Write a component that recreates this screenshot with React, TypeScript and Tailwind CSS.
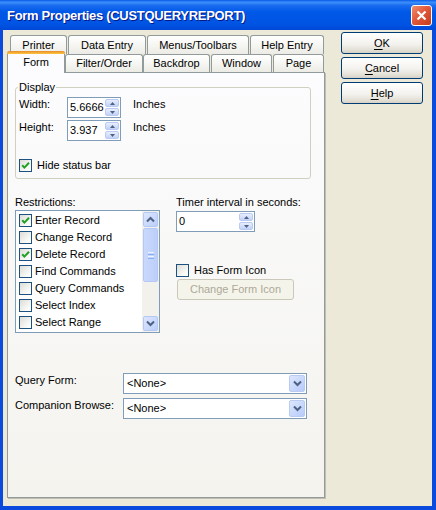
import type { ReactNode } from "react";

const CheckBox = ({ checked }: { checked?: boolean }) => (
  <span className="w-[13px] h-[13px] shrink-0 border border-[#1C5180] bg-[linear-gradient(135deg,#DCDCD7,#F8F8F6_70%,#FFFFFF)] flex items-center justify-center">
    {checked && (
      <svg width="9" height="9" viewBox="0 0 9 9" className="block">
        <polyline points="1.2,4.2 3.4,6.6 8,1.8" fill="none" stroke="#21A121" strokeWidth="2" />
      </svg>
    )}
  </span>
);

const Chevron = ({ up }: { up?: boolean }) => (
  <svg width="9" height="7" viewBox="0 0 9 7" className="block">
    <polyline
      points={up ? "1,5.5 4.5,2 8,5.5" : "1,1.5 4.5,5 8,1.5"}
      fill="none"
      stroke="#4D6185"
      strokeWidth="2"
    />
  </svg>
);

const Triangle = ({ up }: { up?: boolean }) => (
  <svg width="5" height="3" viewBox="0 0 5 3" className="block">
    <polygon points={up ? "0,3 2.5,0 5,3" : "0,0 5,0 2.5,3"} fill="#4D6185" />
  </svg>
);

const Spinner = () => (
  <div className="w-[15px] flex flex-col gap-px py-px pr-px">
    <div className="flex-1 rounded-[2px] border border-[#B9CBF3] bg-[linear-gradient(to_bottom,#E8EEFD,#C2D2F6)] flex items-center justify-center">
      <Triangle up />
    </div>
    <div className="flex-1 rounded-[2px] border border-[#B9CBF3] bg-[linear-gradient(to_bottom,#E8EEFD,#C2D2F6)] flex items-center justify-center">
      <Triangle />
    </div>
  </div>
);

const SpinBox = ({ value, className }: { value: string; className: string }) => (
  <div className={`${className} h-[21px] border border-[#7F9DB9] bg-white flex`}>
    <span className="flex-1 pl-[2px] leading-[19px]">{value}</span>
    <Spinner />
  </div>
);

const Combo = ({ value }: { value: string }) => (
  <div className="w-[184px] h-[21px] border border-[#7F9DB9] bg-white flex">
    <span className="flex-1 pl-[3px] leading-[19px]">{value}</span>
    <div className="w-[16px] my-px mr-px rounded-[2px] border border-[#B9CBF3] bg-[linear-gradient(135deg,#DCE6FE,#B7CBF9)] flex items-center justify-center">
      <Chevron />
    </div>
  </div>
);

const XpButton = ({ children }: { children: ReactNode }) => (
  <div className="w-[82px] h-[22px] rounded-[3px] border border-[#003C74] bg-[linear-gradient(to_bottom,#FFFFFF,#F3F2EE_55%,#E3E0D6_85%,#D6D0C5)] flex items-center justify-center">
    {children}
  </div>
);

const Tab = ({ label, className }: { label: string; className: string }) => (
  <div
    className={`${className} shrink-0 border border-b-0 border-[#919B9C] rounded-t-[3px] bg-[linear-gradient(to_bottom,#FFFFFF,#F6F6F3_50%,#ECEBE5)] flex items-center justify-center`}
  >
    {label}
  </div>
);

const ScrollButton = ({ up }: { up?: boolean }) => (
  <div className="h-[17px] p-px">
    <div className="h-full rounded-[2px] border border-[#B4C8F6] bg-[linear-gradient(135deg,#DCE6FE,#BCCFFA)] flex items-center justify-center">
      <Chevron up={up} />
    </div>
  </div>
);

const restrictions = [
  { label: "Enter Record", checked: true },
  { label: "Change Record", checked: false },
  { label: "Delete Record", checked: true },
  { label: "Find Commands", checked: false },
  { label: "Query Commands", checked: false },
  { label: "Select Index", checked: false },
  { label: "Select Range", checked: false },
];

export default function App() {
  return (
    <div className="w-[436px] h-[510px] flex flex-col bg-[#0A4ADC] font-['Liberation_Sans',Arial,sans-serif] text-[11px] leading-[13px] text-black select-none">
      {/* title bar */}
      <div className="h-[30px] shrink-0 flex items-center bg-[linear-gradient(to_bottom,#0A5CEB_0%,#3C8FF8_8%,#1A6CF0_18%,#0058E8_40%,#0054E3_80%,#0048D8_100%)]">
        <span className="pl-[7px] flex-1 text-[13px] tracking-[-0.3px] font-bold text-white [text-shadow:1px_1px_0_#0A1883]">
          Form Properties (CUSTQUERYREPORT)
        </span>
        <div className="mr-[4px] w-[21px] h-[21px] rounded-[3px] border border-white bg-[linear-gradient(135deg,#F0906E,#E2583A_45%,#C43A1C)] flex items-center justify-center">
          <svg width="11" height="11" viewBox="0 0 11 11" className="block">
            <path d="M1.5 1.5 L9.5 9.5 M9.5 1.5 L1.5 9.5" stroke="white" strokeWidth="2.2" />
          </svg>
        </div>
      </div>

      {/* body */}
      <div className="flex-1 ml-[3px] mr-[4px] mb-[4px] bg-[#ECE9D8] flex pt-[2px] pl-[4px]">
        <div className="pt-[3px] flex flex-col">
          {/* back row of tabs */}
          <div className="h-[16px] flex gap-px pl-[3px]">
            <Tab label="Printer" className="w-[57px] h-[19px]" />
            <Tab label="Data Entry" className="w-[78px] h-[19px]" />
            <Tab label="Menus/Toolbars" className="w-[102px] h-[19px]" />
            <Tab label="Help Entry" className="w-[74px] h-[19px]" />
          </div>
          {/* front row of tabs */}
          <div className="relative z-10 h-[21px] flex items-end">
            <div className="w-[58px] h-[22px] -mb-px shrink-0 border-x border-[#919B9C] rounded-t-[3px] bg-[#FCFCFE] flex flex-col">
              <div className="h-[3px] -mx-px rounded-t-[3px] bg-[linear-gradient(to_bottom,#E68B2C,#FFC73C)]" />
              <div className="flex-1 flex items-start justify-center pt-[2px]">Form</div>
            </div>
            <Tab label="Filter/Order" className="w-[78px] h-[18px]" />
            <Tab label="Backdrop" className="w-[67px] h-[18px]" />
            <Tab label="Window" className="ml-px w-[61px] h-[18px]" />
            <Tab label="Page" className="ml-px w-[51px] h-[18px]" />
          </div>

          {/* tab page */}
          <div className="w-[318px] h-[426px] border border-[#919B9C] bg-[linear-gradient(to_bottom,#FCFCFE,#F4F3EE)] shadow-[1px_1px_0_#C0BEB2] px-[7px]">
            <fieldset className="mt-[8px] w-[296px] border border-[#D0D0BF] rounded-[3px] px-[2px] pb-[6px]">
              <legend className="px-px leading-[13px]">Display</legend>
              <div className="mt-[3px] flex items-start pl-px">
                <span className="w-[48px] pt-[1px]">Width:</span>
                <SpinBox value="5.6666" className="w-[54px]" />
                <span className="ml-[12px] pt-[1px]">Inches</span>
              </div>
              <div className="mt-[2px] flex items-start pl-px">
                <span className="w-[48px] pt-[1px]">Height:</span>
                <SpinBox value="3.937" className="w-[54px]" />
                <span className="ml-[12px] pt-[1px]">Inches</span>
              </div>
              <div className="mt-[18px] flex items-center pl-px">
                <CheckBox checked />
                <span className="ml-[5px]">Hide status bar</span>
              </div>
            </fieldset>

            <div className="mt-[17px] flex">
              <div className="w-[145px]">
                <div>Restrictions:</div>
                <div className="mt-px h-[123px] border border-[#7F9DB9] bg-white flex">
                  <div className="flex-1 pt-px pl-[3px]">
                    {restrictions.map((r) => (
                      <div key={r.label} className="h-[17px] flex items-center">
                        <CheckBox checked={r.checked} />
                        <span className="ml-[3px]">{r.label}</span>
                      </div>
                    ))}
                  </div>
                  <div className="w-[17px] flex flex-col bg-[#F3F1EC]">
                    <ScrollButton up />
                    <div className="h-[54px] px-px">
                      <div className="h-full rounded-[2px] border border-[#B4C8F6] bg-[linear-gradient(to_right,#C9D8FC,#BCCFFA)] flex flex-col items-center justify-center gap-px">
                        <div className="w-[6px] h-px bg-[#EEF4FE]" />
                        <div className="w-[6px] h-px bg-[#8CB0F8]" />
                        <div className="w-[6px] h-px bg-[#EEF4FE]" />
                        <div className="w-[6px] h-px bg-[#8CB0F8]" />
                      </div>
                    </div>
                    <div className="flex-1" />
                    <ScrollButton />
                  </div>
                </div>
              </div>

              <div className="ml-[16px]">
                <div>Timer interval in seconds:</div>
                <SpinBox value="0" className="mt-[2px] w-[79px]" />
                <div className="mt-[32px] flex items-center">
                  <CheckBox />
                  <span className="ml-[5px]">Has Form Icon</span>
                </div>
                <div className="mt-[2px] ml-px w-[117px] h-[21px] rounded-[3px] border border-[#CAC8BB] bg-[#F5F4EA] text-[#ACA899] flex items-center justify-center">
                  Change Form Icon
                </div>
              </div>
            </div>

            <div className="mt-[40px] flex items-start">
              <span className="w-[108px] pt-px">Query Form:</span>
              <Combo value="<None>" />
            </div>
            <div className="mt-[4px] flex items-start">
              <span className="w-[108px] pt-px">Companion Browse:</span>
              <Combo value="<None>" />
            </div>
          </div>
        </div>

        {/* dialog buttons */}
        <div className="ml-[16px] flex flex-col gap-[3px]">
          <XpButton>
            <span className="underline underline-offset-2">O</span>K
          </XpButton>
          <XpButton>
            <span className="underline underline-offset-2">C</span>ancel
          </XpButton>
          <XpButton>
            <span className="underline underline-offset-2">H</span>elp
          </XpButton>
        </div>
      </div>
    </div>
  );
}
